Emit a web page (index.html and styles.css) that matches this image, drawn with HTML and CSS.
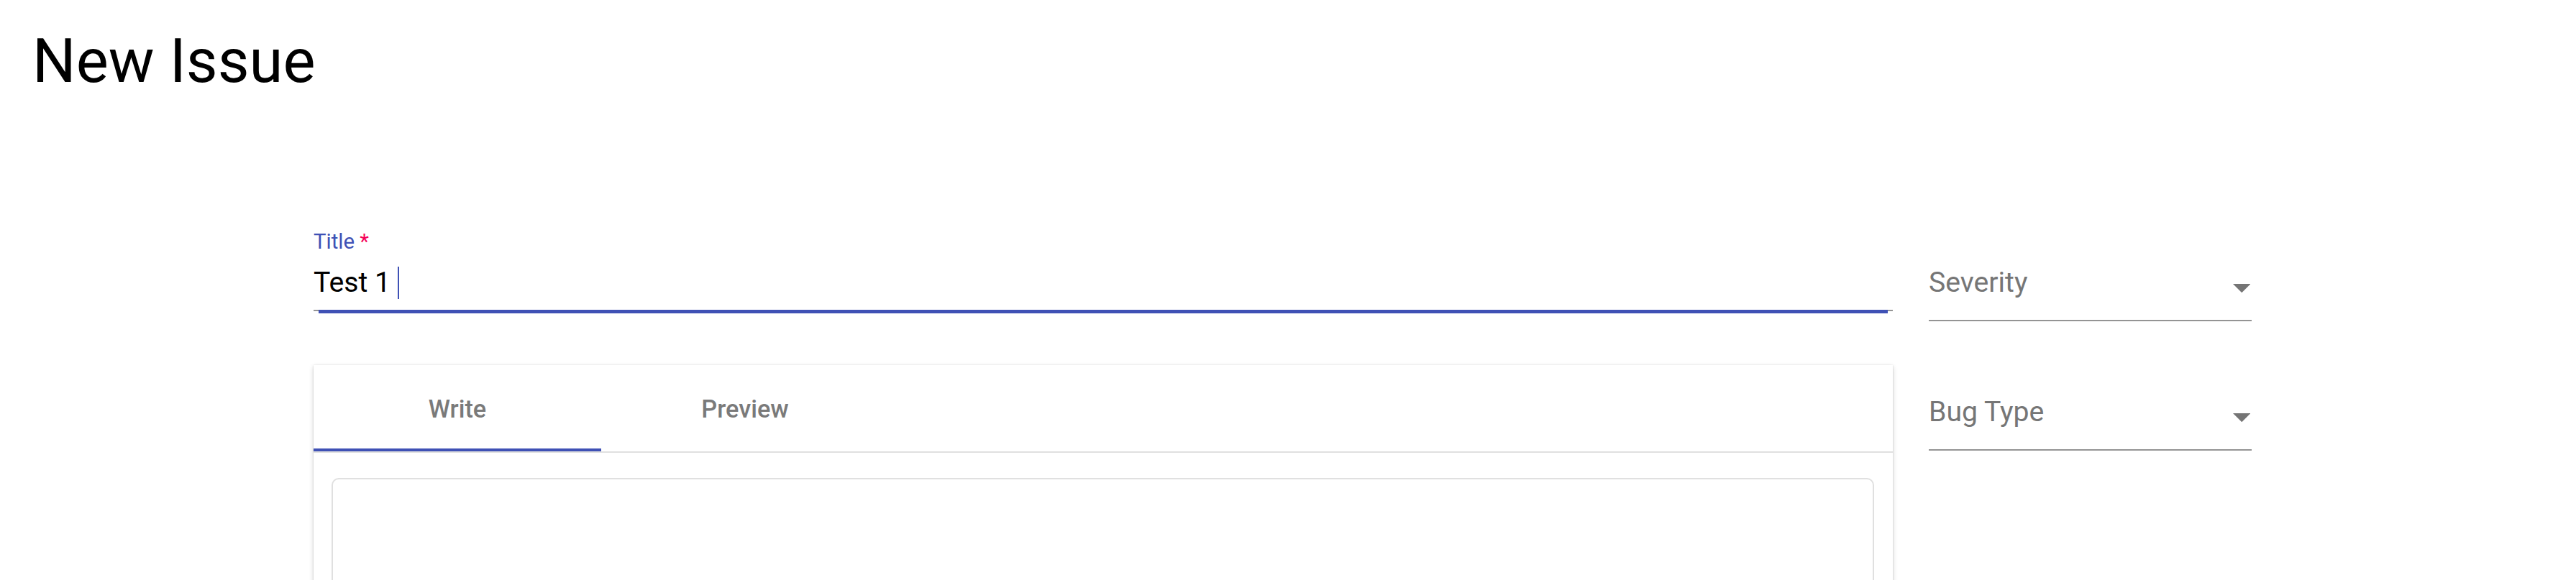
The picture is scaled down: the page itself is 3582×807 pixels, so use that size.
FILE: index.html
```html
<!DOCTYPE html>
<html lang="en">
<head>
<meta charset="utf-8">
<title>New Issue</title>
<link rel="stylesheet" href="styles.css">
</head>
<body>
<div class="page">
  <h1 class="page-title">New Issue</h1>
  <form class="issue-form">
    <div class="main-col">
      <div class="title-field">
        <label class="field-label">Title<span class="req"> *</span></label>
        <div class="input-row"><span class="input-text">Test 1&nbsp;</span><span class="caret"></span></div>
        <div class="underline">
          <div class="ul-end"></div>
          <div class="ul-active"></div>
          <div class="ul-end"></div>
        </div>
      </div>
      <div class="editor-card">
        <div class="tabs">
          <div class="tab tab-selected">Write</div>
          <div class="tab">Preview</div>
        </div>
        <div class="editor-body">
          <div class="editor-textarea"></div>
        </div>
      </div>
    </div>
    <div class="side-col">
      <div class="select-field">
        <div class="select-row">
          <span class="select-label">Severity</span>
          <svg class="select-arrow" viewBox="7 10 10 5" width="24.5" height="12.25"><path d="M7 10l5 5 5-5z"/></svg>
        </div>
        <div class="select-underline"></div>
      </div>
      <div class="select-field select-second">
        <div class="select-row">
          <span class="select-label">Bug Type</span>
          <svg class="select-arrow" viewBox="7 10 10 5" width="24.5" height="12.25"><path d="M7 10l5 5 5-5z"/></svg>
        </div>
        <div class="select-underline"></div>
      </div>
    </div>
  </form>
</div>
</body>
</html>
```

FILE: styles.css
```css
html, body {
  margin: 0;
  padding: 0;
  background: #fff;
}

body {
  font-family: Roboto, "Liberation Sans", sans-serif;
  color: rgba(0, 0, 0, 0.87);
  overflow: hidden;
}

.page {
  width: 3582px;
  height: 807px;
  overflow: hidden;
}

.page-title {
  margin: 0;
  padding: 36.2px 0 0 45px;
  font-size: 85px;
  line-height: 99.5px;
  font-weight: 400;
  color: #000;
}

.issue-form {
  display: grid;
  grid-template-columns: 2196px 449px;
  column-gap: 50px;
  margin: 186.5px 0 0 436px;
}

.main-col,
.side-col {
  display: flex;
  flex-direction: column;
}

/* Title text field */
.field-label {
  display: block;
  font-size: 29.4px;
  line-height: 29.4px;
  color: #3f51b5;
}

.req {
  color: #f50057;
}

.input-row {
  display: flex;
  align-items: flex-start;
  margin-top: 18.4px;
  height: 46.5px;
  padding-bottom: 14.5px;
}

.input-text {
  font-size: 39.2px;
  line-height: 46.5px;
  color: #000;
  white-space: pre;
}

.caret {
  width: 2px;
  height: 45px;
  margin-top: 1px;
  background: #3f51b5;
}

.underline {
  display: flex;
  align-items: flex-start;
  height: 4.9px;
}

.ul-end {
  width: 7px;
  height: 2.45px;
  background: #949494;
}

.ul-active {
  flex: 1;
  height: 4.8px;
  background: #3f51b5;
}

/* Editor card */
.editor-card {
  margin-top: 72.5px;
  height: 400px;
  background: #fff;
  box-shadow: 0 2.45px 7px rgba(0, 0, 0, 0.16), 0 1.2px 2.45px rgba(0, 0, 0, 0.1), 0 0 1.5px rgba(0, 0, 0, 0.1);
}

.tabs {
  display: flex;
  border-bottom: 2.45px solid #e0e0e0;
}

.tab {
  width: 400px;
  height: 120px;
  box-sizing: border-box;
  display: flex;
  align-items: center;
  justify-content: center;
  font-size: 34.3px;
  font-weight: 500;
  color: #7a7a7a;
  border-bottom: 4.9px solid transparent;
  padding-top: 4.9px;
}

.tab-selected {
  border-bottom-color: #3f51b5;
}

.editor-body {
  padding: 35px 26px 0 25px;
}

.editor-textarea {
  height: 400px;
  border: 2.45px solid #e0e0e0;
  border-radius: 10px;
}

/* Select fields */
.select-field {
  padding-top: 47.8px;
}

.select-second {
  margin-top: 54.7px;
}

.select-row {
  display: flex;
  justify-content: space-between;
  align-items: flex-start;
  height: 46.5px;
  padding-bottom: 28.5px;
}

.select-label {
  font-size: 39.2px;
  line-height: 46.5px;
  color: #767676;
}

.select-arrow {
  margin-top: 25px;
  margin-right: 2px;
  fill: #757575;
}

.select-underline {
  height: 2.45px;
  background: #949494;
}
```
